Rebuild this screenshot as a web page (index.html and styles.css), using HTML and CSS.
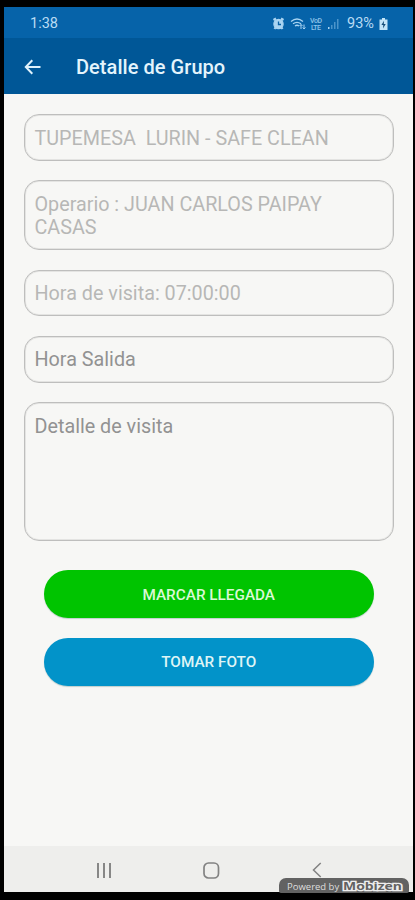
FILE: index.html
```html
<!DOCTYPE html>
<html lang="es">
<head>
<meta charset="utf-8">
<title>Detalle de Grupo</title>
<link rel="stylesheet" href="styles.css">
</head>
<body>
<main class="phone">
  <div class="status">
    <span class="time">1:38</span>
    <svg class="status-icons" width="68" height="16" viewBox="0 0 68 16">
      <g fill="none" stroke="#a9d4f2" stroke-width="1.3">
        <path d="M1.500 4L4 2.500M11.500 4L9 2.500M2.500 13l1-1.500M10.500 13l-1-1.500" stroke-width="2.200"/>
        <circle cx="6.500" cy="8" r="4.600" fill="#a9d4f2"/>
        <path d="M6.500 5.500v3H9" stroke="#0862a7"/>
        <path d="M19 5.500c4-3.300 8-3.300 12 0M21 7.800c3-2.200 5-2.200 8 0M23 10q2-1.500 4 0"/>
        <path d="M29 13V8.500M27.500 10L29 8.500l1.500 1.500M32 8.500V13M30.700 11.500L32 13l1.500-1.500" stroke-width="1"/>
      </g>
      <g class="volte"><text x="38" y="7.300" textLength="12">VoD</text><text x="39" y="14" textLength="10">LTE</text></g>
      <path d="M56 11h1.500v2H56z" fill="#a9d4f2"/>
      <path d="M59 9h1.500v4H59zM62 6h1.500v7H62zM65 3h1.500v10H65z" fill="#4b94ca"/>
    </svg>
    <span class="percent">93%</span>
    <svg class="battery" width="9" height="12" viewBox="0 0 9 12"><path d="M3 0h3v1.500h2.500V12h-8V1.500H3z" fill="#c4e5f8"/><path d="M5 2.800L2.400 7h1.900L4 10.500 6.700 6H4.800z" fill="#174e79"/></svg>
  </div>
  <header class="bar">
    <svg class="back" width="18" height="16" viewBox="0 0 18 16"><path d="M8.300 1.300L1.800 8l6.500 6.700M2 8h14.500" fill="none" stroke="#dff2fc" stroke-width="2"/></svg>
    <h1>Detalle de Grupo</h1>
  </header>
  <section class="form">
    <div class="field off">TUPEMESA&nbsp; LURIN - SAFE CLEAN</div>
    <div class="field off tall">Operario : JUAN CARLOS PAIPAY<br>CASAS</div>
    <div class="field off">Hora de visita: 07:00:00</div>
    <div class="field">Hora Salida</div>
    <div class="field area">Detalle de visita</div>
    <div class="actions">
      <button class="btn green" type="button">MARCAR LLEGADA</button>
      <button class="btn blue" type="button">TOMAR FOTO</button>
    </div>
  </section>
  <nav class="nav">
    <svg width="16" height="17" viewBox="0 0 16 17"><path d="M2 1v15M8 1v15M14 1v15" stroke="#828282" stroke-width="1.900"/></svg>
    <svg width="17" height="17" viewBox="0 0 17 17"><rect x="1" y="1" width="14.500" height="15" rx="4.500" fill="none" stroke="#828282" stroke-width="1.700"/></svg>
    <svg width="10" height="16" viewBox="0 0 10 16"><path d="M8.700 1L1.500 8l7.200 7" fill="none" stroke="#828282" stroke-width="1.500"/></svg>
  </nav>
  <div class="credit"><span>Powered by</span><svg width="64" height="13" viewBox="0 0 64 13"><text class="brand" x="2" y="10" textLength="59" lengthAdjust="spacingAndGlyphs">Mobizen</text></svg></div>
</main>
</body>
</html>
```
FILE: styles.css
```css
* { box-sizing: border-box; }
body {
  margin: 0;
  height: 900px;
  padding: 7px 2px 8px 4px;
  background: #000;
  font-family: Roboto, "Liberation Sans", sans-serif;
  overflow: hidden;
}
svg { display: block; flex: none; }
.phone {
  position: relative;
  height: 885px;
  display: flex;
  flex-direction: column;
  background: #f7f7f5;
}
.status {
  height: 31px;
  display: flex;
  align-items: center;
  padding: 2px 25px 0 26px;
  background: #0663a9;
  color: #b9dcf4;
  font-size: 14.500px;
}
.status-icons { margin-left: auto; }
.percent { margin-left: 7px; width: 28px; white-space: nowrap; }
.battery { margin-left: 4px; }
.volte { fill: #8fc3e9; font-size: 7px; font-weight: 500; }
.bar {
  height: 56px;
  display: flex;
  align-items: center;
  padding: 2px 0 0 20px;
  background: #005797;
  color: #e4f4fc;
}
h1 { margin: 0 0 0 34px; font-size: 20px; font-weight: 500; letter-spacing: 0.050px; white-space: nowrap; }
.form {
  flex: 1;
  display: flex;
  flex-direction: column;
  gap: 19.500px;
  padding: 20px 19.500px 0 20px;
}
.field {
  height: 46.700px;
  padding: 11.500px 10px 0 9.500px;
  border: 1px solid #bebebd;
  box-shadow: inset 0 0 0 1px #e4e4e2;
  border-radius: 15px;
  color: #929292;
  font-size: 19.750px;
  line-height: 23px;
  white-space: nowrap;
}
.off { color: #b7b7b6; }
.tall { height: 70px; }
.area { height: 139px; }
.actions { display: flex; flex-direction: column; gap: 19.500px; padding: 9.500px 20px 0; }
.btn {
  height: 48px;
  border: 0;
  border-radius: 24px;
  padding: 1px 0 0;
  font: 500 15.300px Roboto, "Liberation Sans", sans-serif;
  color: #dff5f6;
  box-shadow: 0 1px 1px #bfcfce;
}
.green { background: #00c400; color: #d9f9d5; }
.blue { background: #0293c9; }
.nav {
  height: 46px;
  display: flex;
  align-items: center;
  padding: 2px 91px 0 92px;
  justify-content: space-between;
  background: #eeeeec;
}
.nav svg:nth-child(2) { margin-right: 2px; }
.credit {
  position: absolute;
  right: 4px;
  bottom: -1px;
  width: 130px;
  height: 15px;
  display: flex;
  align-items: center;
  justify-content: space-between;
  padding: 2px 4px 0 8px;
  border-radius: 7px 7px 2px 2px;
  background: #626262;
  color: #dedede;
  font: 9.500px "Open Sans", sans-serif;
  white-space: nowrap;
}
.brand {
  font: 700 10px "Open Sans", sans-serif;
  fill: #626262;
  stroke: #eee;
  stroke-width: 2.500px;
  paint-order: stroke;
}
```
